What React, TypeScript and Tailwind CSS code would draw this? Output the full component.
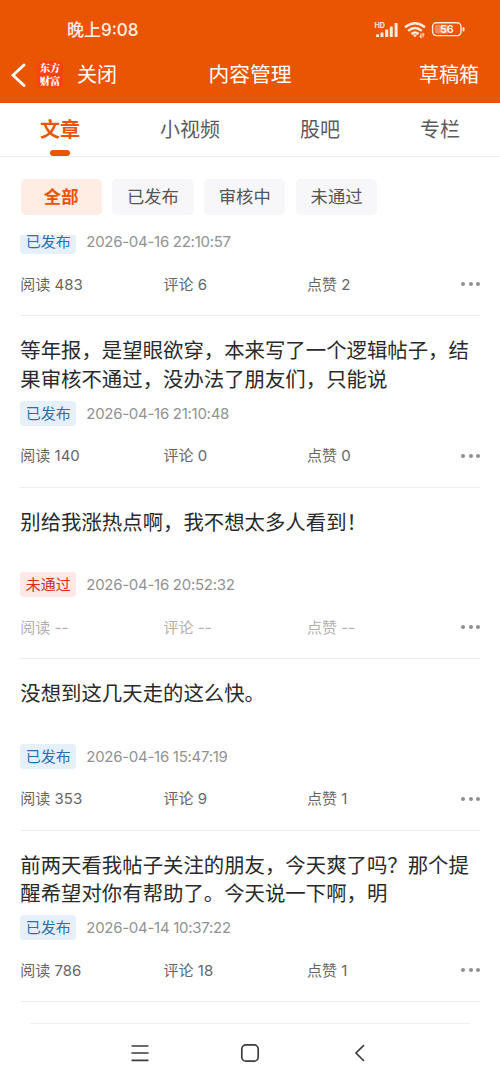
type Post = {
  title?: string;
  status: 'published' | 'rejected';
  date: string;
  reads: string;
  comments: string;
  likes: string;
};

const posts: Post[] = [
  { status: 'published', date: '2026-04-16 22:10:57', reads: '483', comments: '6', likes: '2' },
  {
    title: '等年报，是望眼欲穿，本来写了一个逻辑帖子，结果审核不通过，没办法了朋友们，只能说',
    status: 'published', date: '2026-04-16 21:10:48', reads: '140', comments: '0', likes: '0',
  },
  {
    title: '别给我涨热点啊，我不想太多人看到！',
    status: 'rejected', date: '2026-04-16 20:52:32', reads: '--', comments: '--', likes: '--',
  },
  {
    title: '没想到这几天走的这么快。',
    status: 'published', date: '2026-04-16 15:47:19', reads: '353', comments: '9', likes: '1',
  },
  {
    title: '前两天看我帖子关注的朋友，今天爽了吗？那个提醒希望对你有帮助了。今天说一下啊，明',
    status: 'published', date: '2026-04-14 10:37:22', reads: '786', comments: '18', likes: '1',
  },
];

function StatusIcons() {
  return (
    <svg width="92" height="20" viewBox="0 0 92 20" fill="none">
      <text x="0.5" y="6.8" fontSize="7" fontWeight="700" fill="#ffe9da" textLength="10.5" lengthAdjust="spacingAndGlyphs">HD</text>
      <g fill="#ffe9da">
        <rect x="2" y="13.3" width="3" height="2.7" rx=".6" />
        <rect x="6.5" y="11.5" width="3" height="4.5" rx=".6" />
        <rect x="11.2" y="8.5" width="3" height="7.5" rx=".6" />
        <rect x="15.8" y="5.5" width="3" height="10.5" rx=".6" />
        <rect x="20.6" y="2" width="3" height="14" rx=".6" />
      </g>
      <g stroke="#ffe9da" strokeWidth="2.4">
        <path d="M31 6.2Q41 -1.8 51 6.2" />
        <path d="M34.2 9.9Q41 4.2 47.8 9.9" />
        <path d="M37.4 13Q41 10.2 44.6 13" />
      </g>
      <path d="M38.6 13.5h4.8l-2.4 2.8z" fill="#ffe9da" />
      <path d="M47 12.5v3.8l-1.3-1.3M49 16.3v-3.8l1.3 1.3" stroke="#ffe9da" strokeWidth="1.1" />
      <rect x="58.6" y="1.8" width="28.4" height="12.8" rx="3.8" stroke="#ffe9da" strokeWidth="1.4" />
      <path d="M63.2 3.8h10.7v8.8H63.2a2.4 2.4 0 0 1-2.4-2.4V6.2a2.4 2.4 0 0 1 2.4-2.4z" fill="#f28a56" />
      <rect x="88.5" y="6" width="2" height="4.4" rx="1" fill="#ffe9da" />
      <text x="72.8" y="12.2" fontSize="10.8" fontWeight="600" fill="#fff" textAnchor="middle">56</text>
    </svg>
  );
}

function Tab({ label, active = false, className }: { label: string; active?: boolean; className: string }) {
  return (
    <div className={`flex flex-col items-center text-[20px] leading-[28px] ${active ? 'font-bold text-[#ea5504]' : 'text-[#5c5c5c]'} ${className}`}>
      <span>{label}</span>
      {active && <span className="mt-[6px] h-[5.5px] w-[20.5px] rounded-full bg-[#ea5504]" />}
    </div>
  );
}

function PostRow({ post }: { post: Post }) {
  const rejected = post.status === 'rejected';
  return (
    <article className="shrink-0 border-b border-[#ededed]">
      {post.title && (
        <h2 className="mt-[21.3px] h-[56.2px] text-[20.4px] leading-[28.5px] text-[#2a2a2a]">{post.title}</h2>
      )}
      <div className="mt-[7px] flex h-[25px] items-center gap-[10px]">
        <span
          className={`flex h-[25px] w-[56px] items-center justify-center rounded-[4px] text-[15px] leading-[25px] ${
            rejected ? 'bg-[#fde8e7] text-[#d8301e]' : 'bg-[#e5f0fa] text-[#2d6db3]'
          }`}
        >
          {rejected ? '未通过' : '已发布'}
        </span>
        <time className="text-[15px] leading-[25px] tracking-[-0.28px] text-[#929292]">{post.date}</time>
      </div>
      <div className={`mt-[17.8px] flex h-[25px] items-center text-[15px] leading-[25px] ${rejected ? 'text-[#b0b0b0]' : 'text-[#666]'}`}>
        <span className="w-[143.3px]">阅读 {post.reads}</span>
        <span className="w-[143.3px]">评论 {post.comments}</span>
        <span>点赞 {post.likes}</span>
        <span className="mr-[-0.5px] ml-auto flex gap-[3.6px]">
          <i className="size-1 rounded-full bg-[#8f8f8f]" />
          <i className="size-1 rounded-full bg-[#8f8f8f]" />
          <i className="size-1 rounded-full bg-[#8f8f8f]" />
        </span>
      </div>
      <div className="h-[18.2px]" />
    </article>
  );
}

export default function App() {
  return (
    <div className="flex h-[1083px] w-[500px] flex-col overflow-hidden bg-white font-['Inter','Noto_Sans_CJK_SC',sans-serif]">
      <header className="h-[103px] shrink-0 bg-[#ea5504] text-white">
        <div className="flex h-[46px] items-start justify-between pt-[18px] pr-[34px] pl-[67px] text-[#ffefe4]">
          <span className="text-[17px] leading-[24px] font-medium">晚上9:08</span>
          <span className="pt-[3px]"><StatusIcons /></span>
        </div>
        <div className="grid h-[57px] grid-cols-[1fr_auto_1fr] items-start px-[10px]">
          <div className="flex h-[57px] items-center">
            <svg width="16" height="24" viewBox="0 0 16 24" fill="none">
              <path d="M14 2L3 12.2L14 22.5" stroke="#fff" strokeWidth="2.8" strokeLinecap="round" />
            </svg>
            <span className="ml-[11px] block h-[27px] w-[26px] rounded-[5px] bg-[#fb4311] py-[1px] text-center font-['Noto_Serif_CJK_SC','Noto_Sans_CJK_SC',sans-serif] text-[10.3px] leading-[12.5px] font-black">
              东方<br />财富
            </span>
            <span className="ml-[14px] text-[20px] leading-[28px]">关闭</span>
          </div>
          <h1 className="pt-[15px] text-[20.8px] leading-[28px]">内容管理</h1>
          <span className="pt-[15px] pr-[11px] text-right text-[20px] leading-[28px]">草稿箱</span>
        </div>
      </header>

      <nav className="flex h-[53.5px] shrink-0 border-b border-[#ececec] pt-[13px]">
        <Tab label="文章" active className="ml-[10px] w-[100px]" />
        <Tab label="小视频" className="ml-[30px] w-[100px]" />
        <Tab label="股吧" className="ml-[30px] w-[100px]" />
        <Tab label="专栏" className="ml-[20px] w-[100px]" />
      </nav>

      <div className="flex h-[78.5px] shrink-0 gap-[10.5px] pt-[22.5px] pl-[20.5px] text-[17.3px] leading-[36px] text-[#555]">
        <span className="h-[35.5px] w-[81.3px] rounded-[5px] bg-[#ffece2] text-center font-bold text-[#ea5504]">全部</span>
        <span className="h-[35.5px] w-[81.3px] rounded-[5px] bg-[#f7f7f9] text-center">已发布</span>
        <span className="h-[35.5px] w-[81.3px] rounded-[5px] bg-[#f7f7f9] text-center">审核中</span>
        <span className="h-[35.5px] w-[81.3px] rounded-[5px] bg-[#f7f7f9] text-center">未通过</span>
      </div>

      <main className="flex h-[767px] shrink-0 flex-col justify-end overflow-hidden px-[20.3px]">
        {posts.map((post) => (
          <PostRow key={post.date} post={post} />
        ))}
      </main>

      <footer className="flex flex-1 flex-col pt-[20.5px]">
        <div className="mx-[30px] h-px bg-[#f0f0f0]" />
        <div className="flex h-[59px] items-center justify-center gap-[90px] text-[#3c3c3c]">
          <svg width="20" height="20" viewBox="0 0 20 20" fill="none" stroke="currentColor" strokeWidth="1.7">
            <path d="M1.5 3h17M1.5 10h17M1.5 17.3h17" />
          </svg>
          <svg width="20" height="20" viewBox="0 0 20 20" fill="none" stroke="currentColor" strokeWidth="1.7">
            <rect x="1.8" y="1.8" width="16.4" height="16.4" rx="4.2" />
          </svg>
          <svg width="20" height="20" viewBox="0 0 20 20" fill="none" stroke="currentColor" strokeWidth="1.7">
            <path d="M14 2.2L6 10l8 8" />
          </svg>
        </div>
      </footer>
    </div>
  );
}
